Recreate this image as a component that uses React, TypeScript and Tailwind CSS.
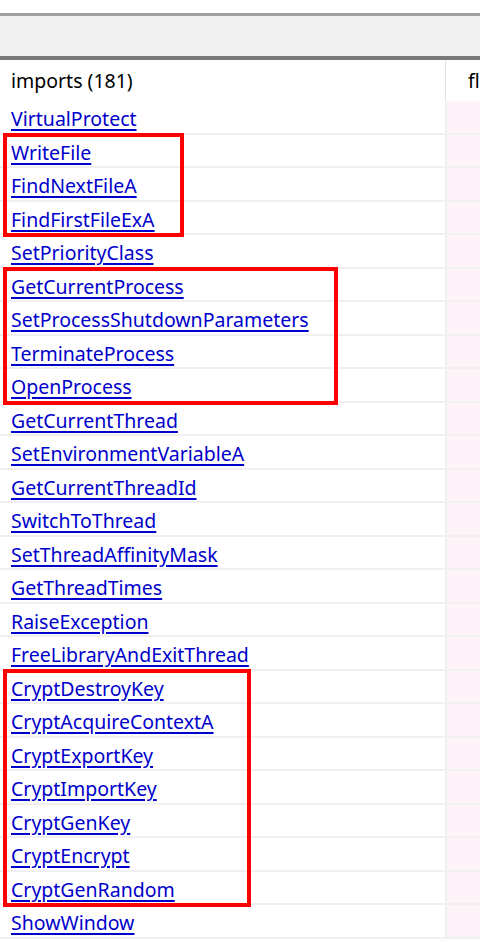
const rows: string[] = [
  'VirtualProtect',
  'WriteFile',
  'FindNextFileA',
  'FindFirstFileExA',
  'SetPriorityClass',
  'GetCurrentProcess',
  'SetProcessShutdownParameters',
  'TerminateProcess',
  'OpenProcess',
  'GetCurrentThread',
  'SetEnvironmentVariableA',
  'GetCurrentThreadId',
  'SwitchToThread',
  'SetThreadAffinityMask',
  'GetThreadTimes',
  'RaiseException',
  'FreeLibraryAndExitThread',
  'CryptDestroyKey',
  'CryptAcquireContextA',
  'CryptExportKey',
  'CryptImportKey',
  'CryptGenKey',
  'CryptEncrypt',
  'CryptGenRandom',
  'ShowWindow',
];

// highlighted groups: [first row index, row count, box width]
const groups: [number, number, string][] = [
  [1, 3, 'w-[181px]'],
  [5, 4, 'w-[335px]'],
  [17, 7, 'w-[248px]'],
];

function Row({ name }: { name: string }) {
  return (
    <div className="flex h-[33.5px] border-b-2 border-[#f0f0f0]">
      <div className="flex-1 flex items-center pl-[11px] pt-[4px]">
        <a
          href="#"
          className="text-[#0000cc] underline decoration-2 underline-offset-[3px] text-[19.5px] leading-none"
        >
          {name}
        </a>
      </div>
      <div className="w-[2px] bg-[#f0f0f0]" />
      <div className="w-[33px] bg-[#fdf3f9]" />
    </div>
  );
}

export default function App() {
  const blocks: React.ReactNode[] = [];
  let i = 0;
  while (i < rows.length) {
    const g = groups.find((x) => x[0] === i);
    if (g) {
      const items = rows.slice(i, i + g[1]);
      blocks.push(
        <div key={i} className="relative">
          {items.map((r) => (
            <Row key={r} name={r} />
          ))}
          <div
            className={`absolute left-[3px] top-[-2px] bottom-[-2px] border-4 border-[#ff0000] pointer-events-none ${g[2]}`}
          />
        </div>
      );
      i += g[1];
    } else {
      blocks.push(<Row key={rows[i]} name={rows[i]} />);
      i++;
    }
  }

  return (
    <div
      className="w-[480px] h-[942px] overflow-hidden bg-white"
      style={{ fontFamily: '"Noto Sans", "Open Sans", sans-serif' }}
    >
      <div className="h-[13px] bg-white" />
      <div className="h-[3px] bg-[#a0a0a0]" />
      <div className="h-[40px] bg-[#f0f0f0]" />
      <div className="h-[4px] bg-[#7a7a7a]" />
      <div className="flex h-[41px]">
        <div className="flex-1 flex items-center pl-[11px] text-[19.5px] text-black">
          imports (181)
        </div>
        <div className="w-[1px] bg-[#e3e3e3]" />
        <div className="w-[34px] flex items-center pl-[22px] text-[19.5px] text-black">
          fl
        </div>
      </div>
      <div>{blocks}</div>
    </div>
  );
}
